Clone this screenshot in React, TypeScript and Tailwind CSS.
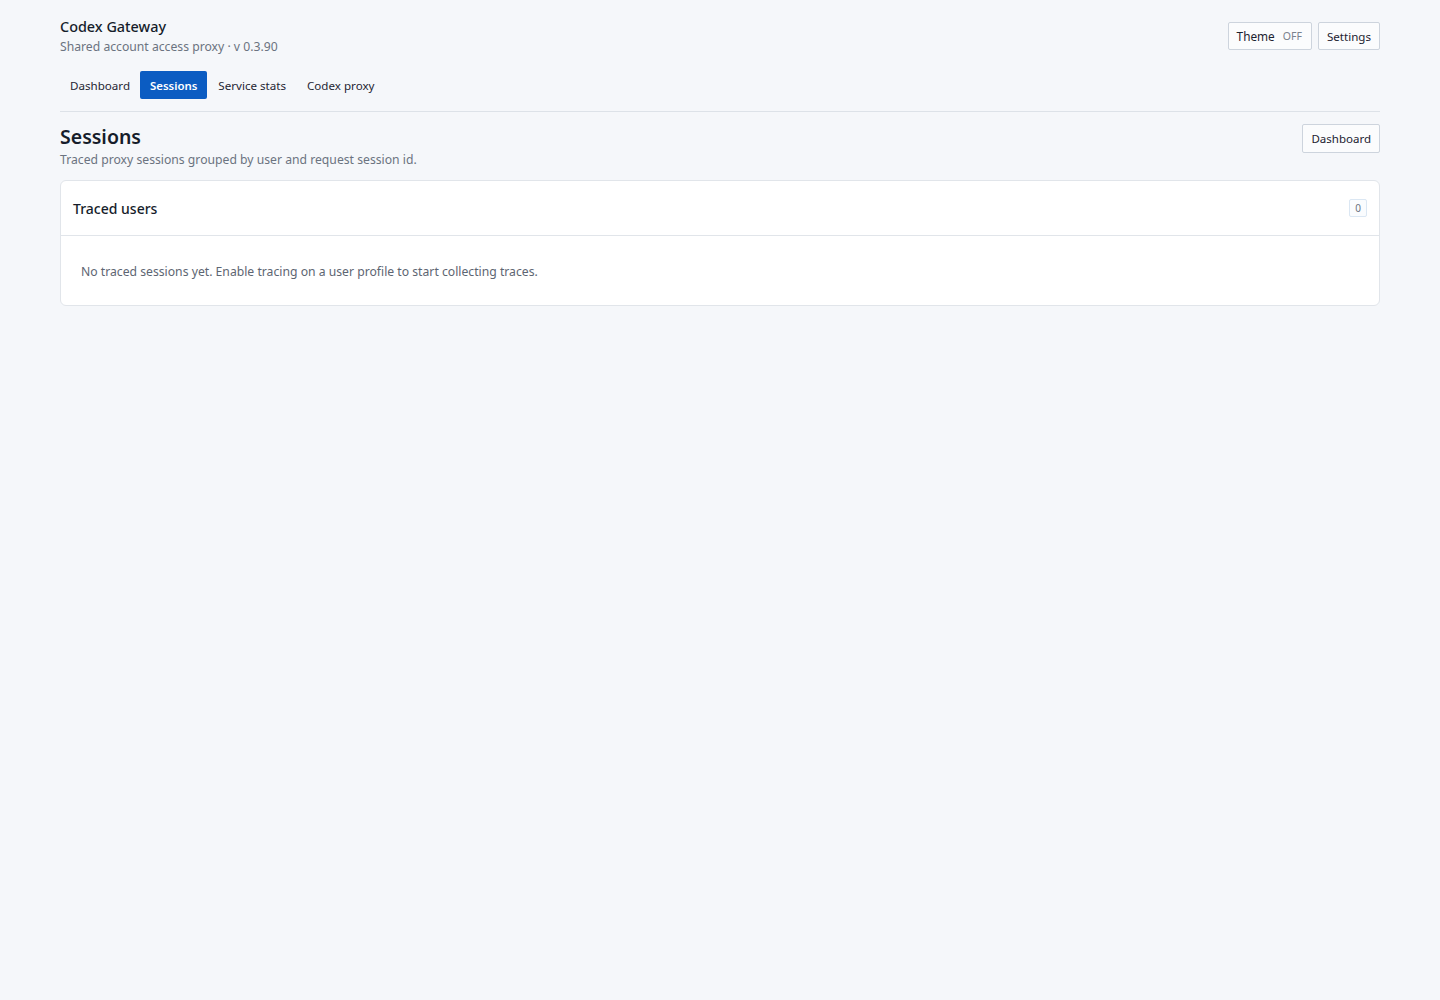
export default function App() {
  const font = { fontFamily: '"Noto Sans", "Open Sans", Arial, sans-serif' };
  return (
    <div className="min-h-[1000px] bg-[#f5f7fa] text-[#1b2230]" style={font}>
      <div className="px-[60px] pt-[17px]">
        <header className="flex items-start justify-between">
          <div className="flex flex-col">
            <div className="text-[14.4px] leading-[20px] font-medium text-[#161d2b]">Codex Gateway</div>
            <div className="text-[12.2px] leading-[20px] text-[#6b7380]">Shared account access proxy · v 0.3.90</div>
          </div>
          <div className="mt-[5px] flex gap-[6px]">
            <button className="flex h-[28px] items-center gap-[8px] rounded-[2px] border border-[#cdd4dd] bg-[#fbfcfd] pr-[9px] pl-[8px] pt-[1px] text-[11.8px] text-[#1b2230]">
              <span>Theme</span>
              <span className="text-[10.5px] text-[#7a828e]">OFF</span>
            </button>
            <button className="flex h-[28px] items-center rounded-[2px] border border-[#cdd4dd] bg-[#fbfcfd] px-[8px] pt-[1px] text-[11.6px] text-[#1b2230]">
              Settings
            </button>
          </div>
        </header>
        <nav className="mt-[14px] flex gap-[1px] border-b border-[#dde2e8] pb-[12px]">
          <button className="h-[28px] rounded-[2px] px-[10px] pt-[1px] text-[11.6px] text-[#1f2633]">Dashboard</button>
          <button className="-ml-[1px] h-[28px] rounded-[2px] bg-[#0b5cc2] px-[10px] pt-[1px] text-[11.4px] font-semibold text-white">Sessions</button>
          <button className="h-[28px] rounded-[2px] px-[10px] pt-[1px] text-[11.6px] text-[#1f2633]">Service stats</button>
          <button className="h-[28px] rounded-[2px] px-[10px] pt-[1px] text-[11.6px] text-[#1f2633]">Codex proxy</button>
        </nav>
        <section className="mt-[12px] flex items-start justify-between">
          <div className="flex flex-col">
            <h1 className="text-[19.5px] leading-[26px] font-semibold text-[#161d2b]">Sessions</h1>
            <p className="text-[12.2px] leading-[20px] text-[#6b7380]">Traced proxy sessions grouped by user and request session id.</p>
          </div>
          <button className="flex h-[29px] items-center rounded-[2px] border border-[#cdd4dd] bg-[#fbfcfd] px-[8px] pt-[1px] text-[11.5px] text-[#1b2230]">
            Dashboard
          </button>
        </section>
        <div className="mt-[10px] rounded-[6px] border border-[#e1e5ea] bg-white">
          <div className="flex h-[55px] items-center justify-between border-b border-[#e1e5ea] px-[12px]">
            <div className="text-[14px] font-medium text-[#161d2b]">Traced users</div>
            <span className="flex h-[18px] min-w-[18px] items-center justify-center rounded-[2px] border border-[#dbe7f3] bg-[#fafcfe] px-[5px] text-[10px] text-[#6b7380]">0</span>
          </div>
          <div className="px-[20px] pt-[26px] pb-[23px] text-[12.2px] leading-[20px] text-[#5d6572]">
            No traced sessions yet. Enable tracing on a user profile to start collecting traces.
          </div>
        </div>
      </div>
    </div>
  );
}
